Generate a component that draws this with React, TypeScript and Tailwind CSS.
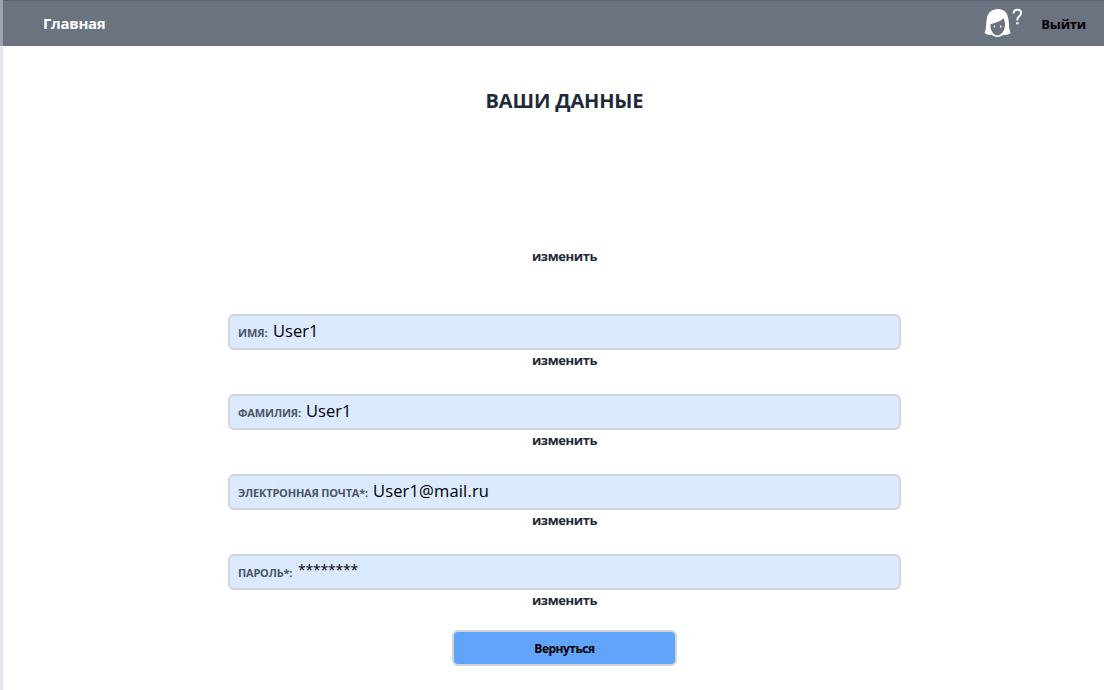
const fields = [
  { label: 'ИМЯ:', value: 'User1', labelClass: 'w-[29px] tracking-[-0.1px]', valueClass: 'pb-0.5 text-[16.5px]' },
  { label: 'ФАМИЛИЯ:', value: 'User1', labelClass: 'w-[62px] tracking-[-0.15px]', valueClass: 'pb-0.5 text-[16.5px]' },
  { label: 'ЭЛЕКТРОННАЯ ПОЧТА*:', value: 'User1@mail.ru', labelClass: 'w-[129px] tracking-[-0.2px]', valueClass: 'pb-0.5 text-[16.5px] tracking-[0.15px]' },
  { label: 'ПАРОЛЬ*:', value: '********', labelClass: 'w-[54px] tracking-[-0.2px]', valueClass: 'pb-1 text-[14px] tracking-[-0.2px]' },
];

function UserIcon() {
  return (
    <svg width="40" height="32" viewBox="0 0 40 32" fill="none" aria-hidden="true">
      <path
        fill="#fff"
        d="M14 1C8 1 3.800 4.600 2.800 10.300 1.900 15 2.600 20.500.6 25c1.800 1.600 4.400 2.200 6.800 1.800 1.900 1 3.700 2.100 6.100 2.100s4.200-1.100 6-2.100c2.600.4 5.200-.2 7-1.800-2-4.500-1.200-10-2.200-14.700C23.300 4.600 20 1 14 1Z"
      />
      <path fill="#6b7280" d="M19.400 10.300c-2.500 3-7.200 4.600-12.900 5.900-.3 5 1.500 8.500 4.200 10.300 1.800 1.200 3.800 1.200 5.600 0 3-2.100 4.700-5.300 4.700-10.500 0-2.100-.6-4.200-1.600-5.700Z" />
      <circle cx="10.400" cy="18.500" r=".9" fill="#fff" />
      <circle cx="16.800" cy="18.500" r=".9" fill="#fff" />
      <path d="M29.500 5.500c.2-2.500 1.700-3.700 3.800-3.700 2.200 0 3.800 1.200 3.800 3.300 0 3.200-3.700 3.400-3.700 6.200v1.200" stroke="#fff" strokeWidth="1.900" />
      <circle cx="33.400" cy="15.200" r="1.200" fill="#fff" />
    </svg>
  );
}

function EditButton() {
  return (
    <button className="block h-5 w-full text-center text-[13px] leading-5 font-bold tracking-[-0.4px] text-gray-800">
      изменить
    </button>
  );
}

export default function App() {
  return (
    <div className="flex h-[690px] w-full overflow-hidden bg-white font-['Open_Sans','Noto_Sans',sans-serif]">
      <div className="flex w-[3px] shrink-0 flex-col">
        <div className="h-[46px] bg-[#9da3af]" />
        <div className="flex-1 bg-slate-200" />
      </div>
      <div className="flex min-w-0 flex-1 flex-col">
        <header className="flex h-[46px] shrink-0 items-center justify-between border-t border-[#5f6673] bg-[#6b7280] pr-[18px] pl-10">
          <a className="pb-0.5 text-[15px] leading-5 font-bold tracking-[-0.3px] text-white">Главная</a>
          <div className="flex items-center">
            <UserIcon />
            <a className="ml-[17px] text-[13px] leading-5 font-bold tracking-[-0.2px] text-black">Выйти</a>
          </div>
        </header>
        <main className="flex flex-col items-center pl-[22px]">
          <h1 className="mt-[41px] text-xl leading-7 font-bold tracking-[-0.15px] text-gray-800">ВАШИ ДАННЫЕ</h1>
          <div className="mt-[131px] w-[673px]">
            <EditButton />
          </div>
          <div className="mt-12 flex w-[673px] flex-col gap-6">
            {fields.map((f) => (
              <div key={f.label}>
                <div className="flex h-9 items-center rounded-md border-2 border-[#d1d5db] bg-[#dbeafe] pl-2">
                  <span className={`${f.labelClass} pt-0.5 text-[11px] leading-4 font-bold whitespace-nowrap text-[#4b5563]`}>{f.label}</span>
                  <span className={`${f.valueClass} ml-1.5 leading-6 font-normal text-black`}>{f.value}</span>
                </div>
                <EditButton />
              </div>
            ))}
          </div>
          <button className="mt-5 h-9 w-[225px] rounded-md border-2 border-[#d1d5db] bg-[#60a5fa] pt-0.5 text-xs font-bold tracking-[-0.5px] text-black">
            Вернуться
          </button>
        </main>
      </div>
    </div>
  );
}
